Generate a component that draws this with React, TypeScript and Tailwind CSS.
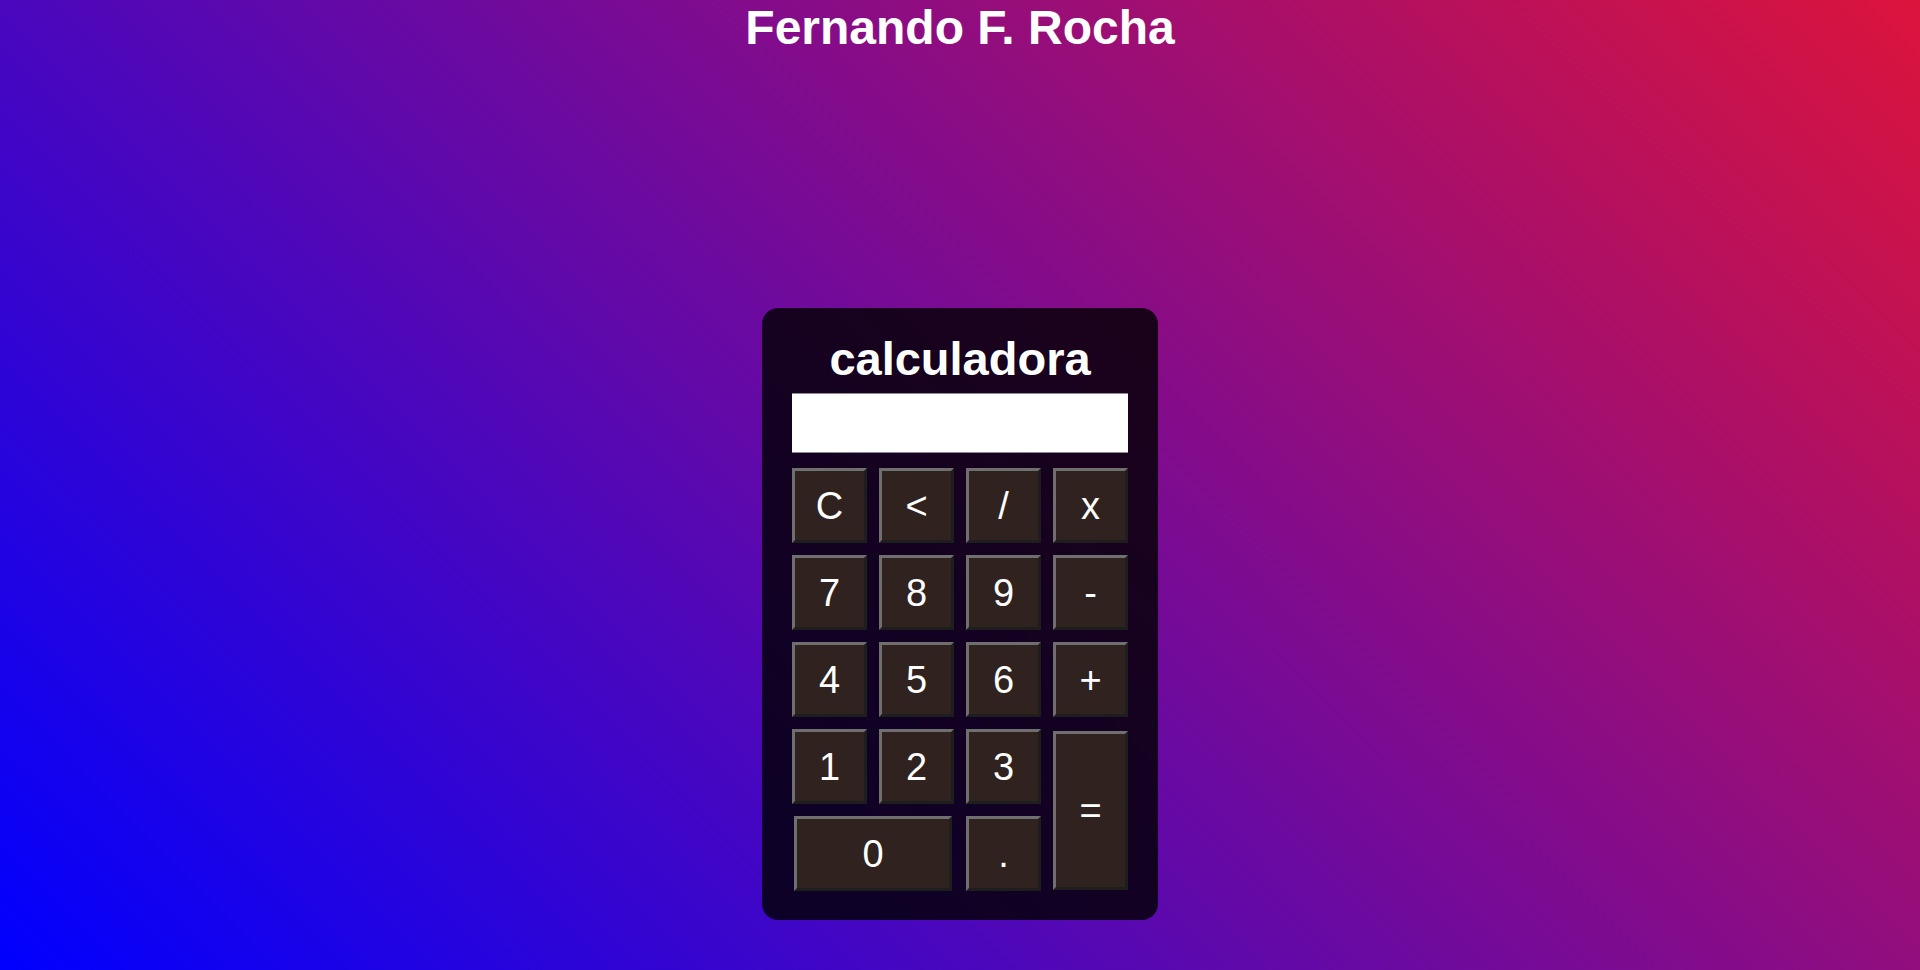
import { useState } from "react";

const keys: { label: string; cls?: string }[] = [
  { label: "C" },
  { label: "<" },
  { label: "/" },
  { label: "x" },
  { label: "7" },
  { label: "8" },
  { label: "9" },
  { label: "-" },
  { label: "4" },
  { label: "5" },
  { label: "6" },
  { label: "+" },
  { label: "1" },
  { label: "2" },
  { label: "3" },
  { label: "=", cls: "row-span-2 mt-[2px] mb-[1px]" },
  { label: "0", cls: "col-span-2 mx-[2px]" },
  { label: "." },
];

export default function App() {
  const [display, setDisplay] = useState("");

  function press(k: string) {
    if (k === "C") return setDisplay("");
    if (k === "<") return setDisplay((d) => d.slice(0, -1));
    if (k === "=") {
      try {
        const expr = display.replace(/x/g, "*");
        // eslint-disable-next-line no-new-func
        setDisplay(String(Function(`return (${expr})`)()));
      } catch {
        setDisplay("");
      }
      return;
    }
    setDisplay((d) => d + k);
  }

  return (
    <div className="min-h-screen bg-[linear-gradient(45deg,#0000ff,#dc143c)] font-['Liberation_Sans',Arial,sans-serif] text-white">
      <h1 className="m-0 text-center text-[48px] font-bold leading-[55px]">
        Fernando F. Rocha
      </h1>

      <div className="mx-auto mt-[253px] w-[396px] rounded-[16px] bg-black/80 px-[30px] pt-[30px] pb-[29px]">
        <h2 className="mb-[14px] text-center text-[47px] font-bold leading-[41px]">
          calculadora
        </h2>
        <input
          readOnly
          value={display}
          className="block h-[60px] w-full border-y border-[#8e8a95] bg-white px-2 text-right text-[32px] text-black outline-none"
        />
        <div className="mt-[15px] grid grid-cols-[repeat(4,75px)] auto-rows-[75px] gap-[12px]">
          {keys.map((k) => (
            <button
              key={k.label}
              onClick={() => press(k.label)}
              className={
                "border-[3px] border-t-[#6f6f6f] border-l-[#6f6f6f] border-r-[#1e1e1e] border-b-[#1e1e1e] bg-[#30221f] text-[38px] leading-none text-white " +
                (k.cls ?? "")
              }
            >
              {k.label}
            </button>
          ))}
        </div>
      </div>
    </div>
  );
}
